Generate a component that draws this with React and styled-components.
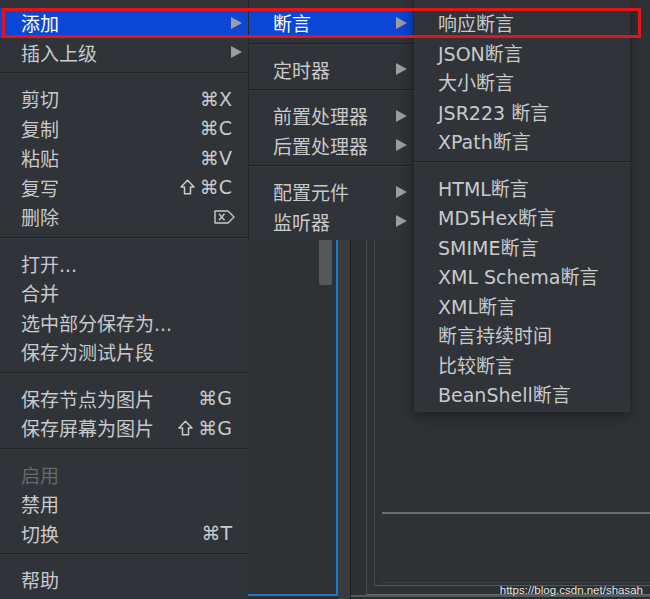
import styled, { createGlobalStyle } from "styled-components";

const GlobalStyle = createGlobalStyle`
  body {
    margin: 0;
    background: #2b2e31;
  }
`;

const mainItems = [
  { label: "添加", arrow: true, active: true },
  { label: "插入上级", arrow: true },
  "sep",
  { label: "剪切", keys: ["⌘X"] },
  { label: "复制", keys: ["⌘C"] },
  { label: "粘贴", keys: ["⌘V"] },
  { label: "复写", keys: ["⌘C"], shift: true },
  { label: "删除", erase: true },
  "sep",
  { label: "打开..." },
  { label: "合并" },
  { label: "选中部分保存为..." },
  { label: "保存为测试片段" },
  "sep",
  { label: "保存节点为图片", keys: ["⌘G"] },
  { label: "保存屏幕为图片", keys: ["⌘G"], shift: true },
  "sep",
  { label: "启用", disabled: true },
  { label: "禁用" },
  { label: "切换", keys: ["⌘T"] },
  "sep",
  { label: "帮助" },
];

const subItems = [
  { label: "断言", arrow: true, active: true },
  "sep",
  { label: "定时器", arrow: true },
  "sep",
  { label: "前置处理器", arrow: true },
  { label: "后置处理器", arrow: true },
  "sep",
  { label: "配置元件", arrow: true },
  { label: "监听器", arrow: true },
];

const assertItems = [
  { label: "响应断言" },
  { label: "JSON断言" },
  { label: "大小断言" },
  { label: "JSR223 断言" },
  { label: "XPath断言" },
  "sep",
  { label: "HTML断言" },
  { label: "MD5Hex断言" },
  { label: "SMIME断言" },
  { label: "XML Schema断言" },
  { label: "XML断言" },
  { label: "断言持续时间" },
  { label: "比较断言" },
  { label: "BeanShell断言" },
];

const EraseIcon = () => (
  <svg width="21" height="14" viewBox="0 0 21 14" fill="none">
    <path
      d="M1 1 H14 L20 7 L14 13 H1 Z"
      stroke="#c9cacc"
      strokeWidth="1.4"
      strokeLinejoin="round"
    />
    <path d="M5 3.8 L10.5 10.2 M10.5 3.8 L5 10.2" stroke="#c9cacc" strokeWidth="1.4" />
  </svg>
);

const ShiftIcon = () => (
  <svg width="15" height="16" viewBox="0 0 15 16" fill="none">
    <path
      d="M7.5 1.2 L14 8 H10.5 V14.8 H4.5 V8 H1 Z"
      stroke="#c9cacc"
      strokeWidth="1.5"
      strokeLinejoin="round"
    />
  </svg>
);

const MenuList = ({ items, width, inset, padBottom, tall, shadow, edge }) => (
  <Menu
    $width={width}
    $padBottom={padBottom}
    $tall={tall}
    $shadow={shadow}
    $edge={edge}
  >
    {items.map((item, index) => {
      if (item === "sep") return <Separator key={index} />;
      return (
        <Row
          key={index}
          $inset={inset}
          $active={item.active}
          $disabled={item.disabled}
        >
          <Label>{item.label}</Label>
          {item.keys && (
            <Shortcut>
              {item.shift && <ShiftIcon />}
              <span>{item.keys[0]}</span>
            </Shortcut>
          )}
          {item.erase && (
            <Shortcut $nudge={-3}>
              <EraseIcon />
            </Shortcut>
          )}
          {item.arrow && <Arrow />}
        </Row>
      );
    })}
  </Menu>
);

const App = () => {
  return (
    <Stage>
      <GlobalStyle />
      <Workspace>
        <TreePanel>
          <ScrollThumb />
        </TreePanel>
        <Gutter />
        <EditorPanel>
          <Frame $left={7} $bottom={8} $line="#4a4d50" $base="#6a6d70">
            <Frame $left={6} $bottom={2} $line="#44474a" $base="#55585b">
              <Frame $left={0} $bottom={0} $line="#25344a" $base="#3d4043">
                <EditorTop />
                <EditorBottom />
              </Frame>
            </Frame>
          </Frame>
        </EditorPanel>
      </Workspace>

      <MenuLayer>
        <MenuList items={mainItems} width={248} inset={21} padBottom={0} tall />
        <MenuList items={subItems} width={165} inset={24} padBottom={4} edge />
        <MenuList
          items={assertItems}
          width={217}
          inset={24}
          padBottom={3}
          shadow
          edge
        />
      </MenuLayer>

      <Highlight />
      <Watermark>https://blog.csdn.net/shasah</Watermark>
    </Stage>
  );
};

export default App;

const Stage = styled.div`
  position: relative;
  width: 650px;
  height: 599px;
  overflow: hidden;
  background: #2b2e31;
`;

const Workspace = styled.div`
  display: flex;
  height: 100%;
`;

const TreePanel = styled.div`
  width: 338px;
  height: 596px;
  box-sizing: border-box;
  background: #2f3235;
  border-right: 2px solid #1f78c6;
  border-bottom: 2px solid #1f78c6;
  display: flex;
  justify-content: flex-end;
  align-items: flex-start;
  padding: 200px 4px 0 0;
`;

const ScrollThumb = styled.div`
  width: 13px;
  height: 85px;
  background: #55585b;
  border-radius: 2px;
`;

const Gutter = styled.div`
  width: 12px;
  background: #393c3f;
  border-right: 1px solid #1f2225;
`;

const EditorPanel = styled.div`
  flex: 1;
  display: flex;
  flex-direction: column;
  box-sizing: border-box;
  height: 597px;
  background: #2e3134;
  padding-left: 15px;
  border-bottom: 2px solid #55585b;
`;

const Frame = styled.div`
  flex: 1;
  display: flex;
  flex-direction: column;
  padding-left: ${(p) => p.$left}px;
  padding-bottom: ${(p) => p.$bottom}px;
  border-left: 1px solid ${(p) => p.$line};
  border-bottom: 1px solid ${(p) => p.$base};
  background: #2f3235;
`;

const EditorTop = styled.div`
  flex: 1;
  background: #303336;
  border-bottom: 2px solid #6a6d70;
`;

const EditorBottom = styled.div`
  height: 68px;
  background: #2f3235;
`;

const MenuLayer = styled.div`
  position: absolute;
  top: 0;
  left: 0;
  display: flex;
  align-items: flex-start;
`;

const Menu = styled.div`
  width: ${(p) => p.$width}px;
  min-height: ${(p) => (p.$tall ? "620px" : "0")};
  box-sizing: border-box;
  padding: 8px 0 ${(p) => p.$padBottom}px;
  background: #303337;
  border-left: ${(p) => (p.$edge ? "1px solid #25282b" : "none")};
  box-shadow: ${(p) => (p.$shadow ? "0 4px 14px rgba(0, 0, 0, 0.45)" : "none")};
  font-family: "DejaVu Sans", "Noto Sans CJK SC", sans-serif;
  font-size: 19px;
  color: #c9cacc;
`;

const Row = styled.div`
  display: flex;
  align-items: center;
  height: 29.5px;
  padding: 0 6px 0 ${(p) => p.$inset}px;
  background: ${(p) => (p.$active ? "#0b46d6" : "transparent")};
  color: ${(p) =>
    p.$active ? "#ffffff" : p.$disabled ? "#67696c" : "#c9cacc"};
  white-space: nowrap;
`;

const Label = styled.span`
  flex: 1;
`;

const Shortcut = styled.span`
  display: flex;
  align-items: center;
  gap: 5px;
  margin-right: ${(p) => 10 + (p.$nudge || 0)}px;
`;

const Arrow = styled.span`
  width: 0;
  height: 0;
  border-left: 11px solid #9c9ea1;
  border-top: 6px solid transparent;
  border-bottom: 6px solid transparent;
`;

const Separator = styled.div`
  height: 1px;
  margin: 5px 0 11px;
  background: #1f2124;
  box-shadow: 0 1px 0 #383b3e;
`;

const Highlight = styled.div`
  position: absolute;
  left: 2px;
  top: 8px;
  width: 639px;
  height: 30px;
  box-sizing: border-box;
  border: 3px solid #e3151c;
  pointer-events: none;
`;

const Watermark = styled.div`
  position: absolute;
  right: 7px;
  bottom: 3px;
  font-family: "Liberation Sans", Arial, sans-serif;
  font-size: 11.5px;
  color: #eeeeee;
  text-shadow: 0 0 1px #000;
`;
